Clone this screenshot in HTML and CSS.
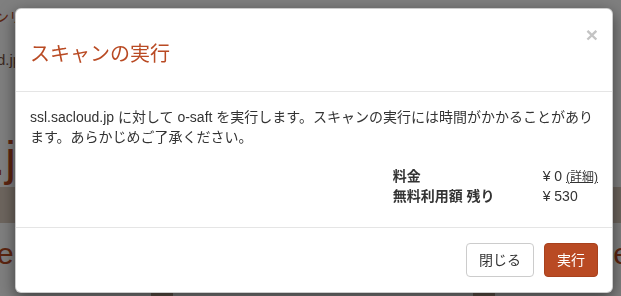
FILE: index.html
```html
<!DOCTYPE html>
<html lang="ja">
<head>
<meta charset="utf-8">
<title>スキャンの実行</title>
<link rel="stylesheet" href="styles.css">
</head>
<body>
<div class="page">
  <div class="bg-nav">ンリ</div>
  <div class="bg-host">d.jp</div>
  <div class="bg-big">.j</div>
  <div class="bg-band"></div>
  <div class="bg-row"><span class="bg-left">er</span><span class="bg-right">e</span></div>
  <div class="bg-cards"><span class="bg-card"></span><span class="bg-card"></span></div>
</div>
<div class="backdrop"></div>
<div class="modal" role="dialog">
  <div class="modal-header">
    <h4 class="modal-title">スキャンの実行</h4>
    <button class="close" type="button">×</button>
  </div>
  <div class="modal-body">
    <p class="lead-text">ssl.sacloud.jp に対して o-saft を実行します。スキャンの実行には時間がかかることがあります。あらかじめご了承ください。</p>
    <dl class="fee">
      <dt>料金</dt>
      <dd>¥ 0 <a href="#" class="detail">(詳細)</a></dd>
      <dt>無料利用額 残り</dt>
      <dd>¥ 530</dd>
    </dl>
  </div>
  <div class="modal-footer">
    <button class="btn btn-default" type="button">閉じる</button>
    <button class="btn btn-primary" type="button">実行</button>
  </div>
</div>
</body>
</html>
```
FILE: styles.css
```css
* { box-sizing: border-box; }
html, body { margin: 0; padding: 0; }
body {
  font-family: "Liberation Sans", "Noto Sans CJK JP", sans-serif;
  font-size: 14px;
  color: #333;
  background: #fff;
  width: 621px;
  height: 296px;
  overflow: hidden;
}

/* underlying page (mostly hidden) */
.page {
  height: 296px;
  overflow: hidden;
  color: #b94a23;
}
.bg-nav {
  padding-top: 7px;
  line-height: 20px;
  font-size: 14px;
  text-indent: -5px;
  white-space: nowrap;
}
.bg-host {
  margin-top: 23px;
  line-height: 20px;
  font-size: 15px;
  color: #7a5242;
  text-indent: -3px;
  white-space: nowrap;
}
.bg-big {
  margin-top: 65px;
  font-size: 48px;
  line-height: 48px;
  height: 48px;
  text-indent: -8px;
  white-space: nowrap;
}
.bg-band {
  margin-top: 4px;
  height: 36px;
  background: #dacabc;
}
.bg-row {
  margin-top: 16px;
  display: flex;
  justify-content: space-between;
  font-size: 30px;
  line-height: 30px;
  height: 30px;
}
.bg-left { margin-left: -3px; }
.bg-right { margin-right: -9px; }
.bg-cards {
  margin-top: 20px;
  display: flex;
  gap: 300px;
  padding-left: 151px;
}
.bg-card {
  display: block;
  width: 22px;
  height: 10px;
  background: #b8a08c;
}

/* overlay */
.backdrop {
  position: fixed;
  inset: 0;
  background: rgba(0, 0, 0, 0.5);
}
.modal {
  position: absolute;
  left: 15px;
  top: 8px;
  width: 598px;
  background: #fff;
  border: 1px solid rgba(0, 0, 0, 0.2);
  border-radius: 6px;
  box-shadow: 0 5px 15px rgba(0, 0, 0, 0.5);
}
.modal-header {
  display: flex;
  justify-content: space-between;
  align-items: flex-start;
  padding: 15px 14px 23px 14px;
  border-bottom: 1px solid #e5e5e5;
}
.modal-title {
  margin: 16px 0 0 0;
  font-size: 20px;
  line-height: 28px;
  font-weight: normal;
  color: #b94a23;
}
.close {
  margin: 0;
  padding: 0;
  border: 0;
  background: none;
  font-family: "Liberation Sans", sans-serif;
  font-size: 21px;
  font-weight: bold;
  line-height: 21px;
  color: #c4c4c4;
  cursor: pointer;
}
.modal-body {
  padding: 15px 14px;
}
.lead-text {
  margin: 0 0 20px 0;
  line-height: 20px;
}
.fee {
  margin: 0 0 6px 0;
  display: grid;
  grid-template-columns: 150px auto;
  justify-content: end;
  line-height: 19px;
}
.fee dt {
  font-weight: bold;
  margin: 0;
}
.fee dd {
  margin: 0;
  white-space: nowrap;
}
.detail {
  color: #333;
  font-size: 12px;
  text-decoration: underline;
}
.modal-footer {
  display: flex;
  justify-content: flex-end;
  gap: 10px;
  padding: 15px 14px;
  border-top: 1px solid #e5e5e5;
}
.btn {
  font-family: "Liberation Sans", "Noto Sans CJK JP", sans-serif;
  font-size: 14px;
  line-height: 20px;
  padding: 6px 12px;
  border-radius: 4px;
  border: 1px solid transparent;
  cursor: pointer;
}
.btn-default {
  background: #fff;
  color: #333;
  border-color: #ccc;
}
.btn-primary {
  background: #b94a23;
  color: #fff;
  border-color: #a8411d;
}
```
